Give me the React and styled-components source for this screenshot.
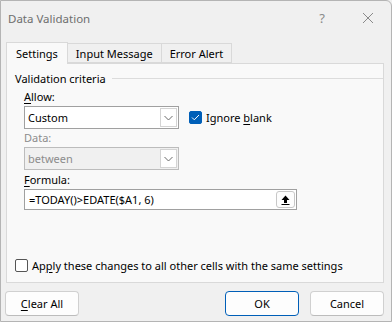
import React from 'react'
import styled, { createGlobalStyle } from 'styled-components'

const Global = createGlobalStyle`
  html, body { margin: 0; padding: 0; background: #f0f0f0; }
  body { font-family: "Noto Sans", "Open Sans", sans-serif; font-size: 11px; color: #000; }
`

const Window = styled.div`
  width: 392px;
  height: 322px;
  box-sizing: border-box;
  border: 1px solid #b4b4b4;
  border-top-right-radius: 6px;
  background: #f0f0f0;
  display: flex;
  flex-direction: column;
`

const TitleBar = styled.div`
  height: 34px;
  display: flex;
  align-items: center;
  padding: 0 0 0 7px;
  color: #6e6e6e;
  font-size: 11.5px;
`

const Title = styled.div`
  flex: 1;
`

const TitleButton = styled.div`
  width: 46px;
  height: 34px;
  display: flex;
  align-items: center;
  justify-content: center;
  color: #8a8a8a;
  font-size: 13px;
`

const Tabs = styled.div`
  display: flex;
  align-items: flex-end;
  padding: 6px 0 0 5px;
  height: 22px;
  position: relative;
  z-index: 1;
`

const Tab = styled.div`
  box-sizing: border-box;
  height: ${p => (p.$active ? '22px' : '20px')};
  padding: 0 ${p => (p.$active ? '9px' : '8px')};
  margin-bottom: ${p => (p.$active ? '-1px' : '0')};
  display: flex;
  align-items: center;
  border: 1px solid #d9d9d9;
  border-bottom: ${p => (p.$active ? 'none' : '1px solid #d9d9d9')};
  border-left: ${p => (p.$first || p.$active ? '1px solid #d9d9d9' : 'none')};
  background: ${p => (p.$active ? '#f9f9f9' : '#f0f0f0')};
`

const Panel = styled.div`
  margin: 0 7px 0 5px;
  height: 220px;
  box-sizing: border-box;
  border: 1px solid #d9d9d9;
  background: #f9f9f9;
  padding: 5px 0 0 8px;
  display: flex;
  flex-direction: column;
`

const GroupTitle = styled.div`
  display: flex;
  align-items: center;
  gap: 6px;
  height: 18px;
  &::after {
    content: '';
    flex: 1;
    height: 1px;
    background: #dcdcdc;
  }
`

const Group = styled.div`
  padding: 1px 0 0 9px;
  display: flex;
  flex-direction: column;
`

const Label = styled.div`
  height: 16px;
  line-height: 16px;
  margin-top: ${p => p.$top || '0'};
  color: ${p => (p.$disabled ? '#8c8c8c' : '#000')};
`

const Row = styled.div`
  display: flex;
  align-items: center;
  gap: 10px;
`

const Select = styled.div`
  width: 155px;
  height: 23px;
  box-sizing: border-box;
  border: 1px solid #a0a0a0;
  background: ${p => (p.$disabled ? '#f0f0f0' : '#fff')};
  border-color: ${p => (p.$disabled ? '#bcbcbc' : '#a0a0a0')};
  color: ${p => (p.$disabled ? '#8c8c8c' : '#000')};
  display: flex;
  align-items: center;
  padding-left: 3px;
  margin-top: 1px;
`

const SelectText = styled.div`
  flex: 1;
`

const Arrow = styled.div`
  width: 17px;
  height: 19px;
  margin-right: 1px;
  box-sizing: border-box;
  border: 1px solid #d4d4d4;
  background: #fff;
  display: flex;
  align-items: center;
  justify-content: center;
`

const CheckRow = styled.label`
  display: flex;
  align-items: center;
  gap: 4px;
`

const Box = styled.div`
  width: 13px;
  height: 13px;
  box-sizing: border-box;
  border-radius: 2px;
  border: 1px solid ${p => (p.$checked ? '#005fb8' : '#555')};
  background: ${p => (p.$checked ? '#005fb8' : '#fff')};
  display: flex;
  align-items: center;
  justify-content: center;
`

const Input = styled.div`
  width: 273px;
  height: 21px;
  box-sizing: border-box;
  border: 1px solid #a0a0a0;
  background: #fff;
  display: flex;
  align-items: center;
  padding-left: 4px;
  margin-top: 1px;
`

const RefButton = styled.div`
  width: 19px;
  height: 17px;
  box-sizing: border-box;
  border: 1px solid #c8c8c8;
  border-radius: 3px;
  margin-right: 1px;
  display: flex;
  align-items: center;
  justify-content: center;
  background: #fdfdfd;
`

const Spacer = styled.div`
  flex: 1;
`

const Footer = styled.div`
  padding: 0 0 9px 0;
`

const Buttons = styled.div`
  display: flex;
  padding: 8px 7px 0 4px;
  gap: 11px;
`

const Button = styled.div`
  width: 74px;
  height: 25px;
  box-sizing: border-box;
  border: 1px solid ${p => (p.$primary ? '#005fb8' : '#d0d0d0')};
  border-bottom-color: ${p => (p.$primary ? '#005fb8' : '#bcbcbc')};
  border-radius: 4px;
  background: #fdfdfd;
  display: flex;
  align-items: center;
  justify-content: center;
  margin-left: ${p => (p.$push ? 'auto' : '0')};
`

const U = styled.span`
  text-decoration: underline;
  text-underline-offset: 2px;
`

const Chevron = () => (
  <svg width="9" height="6" viewBox="0 0 9 6">
    <path d="M0.5 1 L4.5 5 L8.5 1" fill="none" stroke="#6a6a6a" strokeWidth="1" />
  </svg>
)

export default function App() {
  return (
    <>
      <Global />
      <Window>
        <TitleBar>
          <Title>Data Validation</Title>
          <TitleButton>?</TitleButton>
          <TitleButton>
            <svg width="12" height="12" viewBox="0 0 12 12">
              <path d="M1 1 L11 11 M11 1 L1 11" stroke="#8a8a8a" strokeWidth="1" />
            </svg>
          </TitleButton>
        </TitleBar>
        <Tabs>
          <Tab $active $first>Settings</Tab>
          <Tab>Input Message</Tab>
          <Tab>Error Alert</Tab>
        </Tabs>
        <Panel>
          <GroupTitle>Validation criteria</GroupTitle>
          <Group>
            <Label $top="1px"><U>A</U>llow:</Label>
            <Row>
              <Select>
                <SelectText>Custom</SelectText>
                <Arrow><Chevron /></Arrow>
              </Select>
              <CheckRow>
                <Box $checked>
                  <svg width="9" height="7" viewBox="0 0 9 7">
                    <path d="M1 3.5 L3.3 5.8 L8 1" fill="none" stroke="#fff" strokeWidth="1" />
                  </svg>
                </Box>
                <span>Ignore <U>b</U>lank</span>
              </CheckRow>
            </Row>
            <Label $top="1px" $disabled>Data:</Label>
            <Row>
              <Select $disabled>
                <SelectText>between</SelectText>
                <Arrow><Chevron /></Arrow>
              </Select>
            </Row>
            <Label $top="2px"><U>F</U>ormula:</Label>
            <Input>
              <SelectText>=TODAY()&gt;EDATE($A1, 6)</SelectText>
              <RefButton>
                <svg width="9" height="10" viewBox="0 0 9 10">
                  <path d="M4.5 0.5 L8.5 5 L6 5 L6 8 L3 8 L3 5 L0.5 5 Z" fill="#000" />
                  <rect x="0.5" y="9" width="8" height="1" fill="#000" />
                </svg>
              </RefButton>
            </Input>
          </Group>
          <Spacer />
          <Footer>
            <CheckRow>
              <Box />
              <span>Ap<U>p</U>ly these changes to all other cells with the same settings</span>
            </CheckRow>
          </Footer>
        </Panel>
        <Buttons>
          <Button><span><U>C</U>lear All</span></Button>
          <Button $primary $push>OK</Button>
          <Button>Cancel</Button>
        </Buttons>
      </Window>
    </>
  )
}
